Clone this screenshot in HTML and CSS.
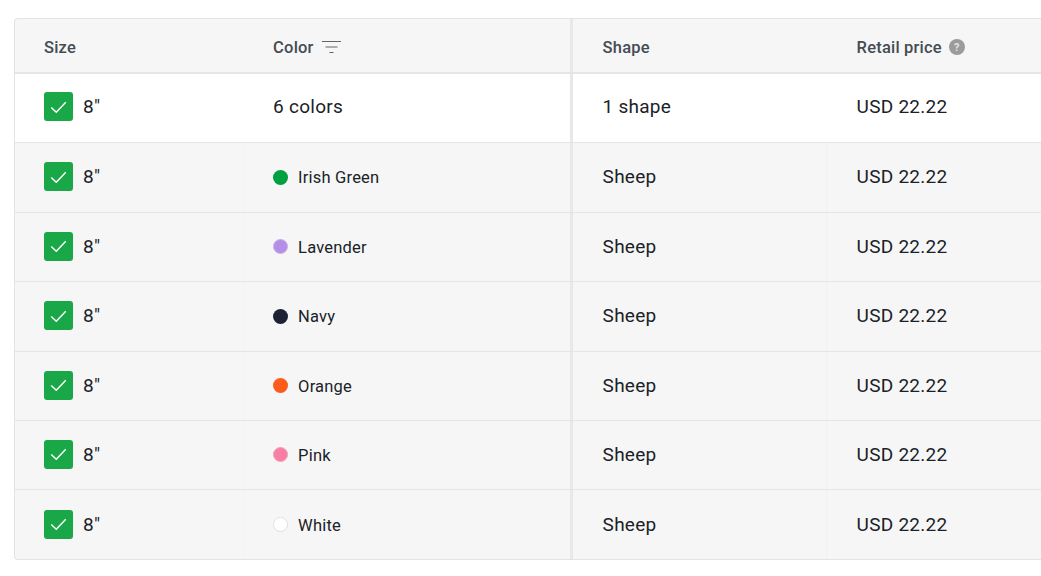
FILE: index.html
```html
<!DOCTYPE html>
<html lang="en">
<head>
<meta charset="utf-8">
<title>Variants</title>
<link rel="stylesheet" href="styles.css">
</head>
<body>
<svg class="defs" width="0" height="0" aria-hidden="true">
  <symbol id="tick" viewBox="0 0 30 30"><path d="M7.5 15.5l5.2 5L22.5 10" fill="none" stroke="#fff" stroke-width="1.5"/></symbol>
</svg>
<div class="table">
  <div class="row head">
    <div class="cell first">Size</div>
    <div class="cell second">Color
      <svg class="filter" width="20" height="14" viewBox="0 0 20 14"><path d="M0 1.5h19M3.5 7h12M7.5 12.5h4" fill="none" stroke="#5f676c" stroke-width="1.2"/></svg>
    </div>
    <div class="cell split">Shape</div>
    <div class="cell">Retail price <span class="help">?</span></div>
  </div>
  <div class="row summary">
    <div class="cell first"><span class="check"><svg width="30" height="30"><use href="#tick"/></svg></span>8"</div>
    <div class="cell second">6 colors</div>
    <div class="cell split">1 shape</div>
    <div class="cell">USD 22.22</div>
  </div>
  <div class="row">
    <div class="cell first"><span class="check"><svg width="30" height="30"><use href="#tick"/></svg></span>8"</div>
    <div class="cell second color"><span class="dot green"></span>Irish Green</div>
    <div class="cell split">Sheep</div>
    <div class="cell">USD 22.22</div>
  </div>
  <div class="row">
    <div class="cell first"><span class="check"><svg width="30" height="30"><use href="#tick"/></svg></span>8"</div>
    <div class="cell second color"><span class="dot lavender"></span>Lavender</div>
    <div class="cell split">Sheep</div>
    <div class="cell">USD 22.22</div>
  </div>
  <div class="row">
    <div class="cell first"><span class="check"><svg width="30" height="30"><use href="#tick"/></svg></span>8"</div>
    <div class="cell second color"><span class="dot navy"></span>Navy</div>
    <div class="cell split">Sheep</div>
    <div class="cell">USD 22.22</div>
  </div>
  <div class="row">
    <div class="cell first"><span class="check"><svg width="30" height="30"><use href="#tick"/></svg></span>8"</div>
    <div class="cell second color"><span class="dot orange"></span>Orange</div>
    <div class="cell split">Sheep</div>
    <div class="cell">USD 22.22</div>
  </div>
  <div class="row penult">
    <div class="cell first"><span class="check"><svg width="30" height="30"><use href="#tick"/></svg></span>8"</div>
    <div class="cell second color"><span class="dot pink"></span>Pink</div>
    <div class="cell split">Sheep</div>
    <div class="cell">USD 22.22</div>
  </div>
  <div class="row last">
    <div class="cell first"><span class="check"><svg width="30" height="30"><use href="#tick"/></svg></span>8"</div>
    <div class="cell second color"><span class="dot white"></span>White</div>
    <div class="cell split">Sheep</div>
    <div class="cell">USD 22.22</div>
  </div>
</div>
</body>
</html>
```
FILE: styles.css
```css
html, body {
  margin: 0;
  height: 576px;
  overflow: hidden;
  background: #fff;
}
body {
  padding: 18px 0 0 13.6px;
  box-sizing: border-box;
  font-family: Roboto, "Liberation Sans", sans-serif;
  color: #1a2228;
}
.defs { position: absolute; }
.table {
  width: 1027px;
  background: #f6f6f6;
  border: 1px solid #e3e3e3;
  border-right: 0;
  border-radius: 4px 0 0 4px;
  overflow: hidden;
}
.row {
  display: grid;
  grid-template-columns: 229px 328px 255px 1fr;
  height: 69.5px;
  box-sizing: border-box;
  border-bottom: 1px solid #e5e5e5;
  font-size: 19px;
  letter-spacing: 0.25px;
}
.row.penult { height: 68.9px; }
.row.last { border-bottom: 0; height: 69.1px; }
.head {
  height: 54.5px;
  border-bottom: 2px solid #e5e5e5;
  font-size: 16.5px;
  letter-spacing: 0.2px;
  font-weight: 500;
  color: #444c52;
}
.summary { background: #fff; }
.cell {
  display: flex;
  align-items: center;
  padding-left: 30px;
  padding-bottom: 1px;
  border-left: 1px solid #f2f2f2;
  margin-left: -1px;
}
.row.last .cell { padding-bottom: 0; }
.cell.first { border-left: 0; margin-left: 0; padding-left: 29.4px; }
.cell.second { padding-left: 29.5px; }
.head .cell { padding-top: 4px; padding-bottom: 0; border-left-color: transparent; }
.summary .cell { padding-bottom: 2px; border-left-color: transparent; }
.cell.split, .head .cell.split, .summary .cell.split {
  border-left: 3px solid #e8e8e8;
  padding-left: 30px;
  margin-left: -2px;
}
.check {
  flex: none;
  width: 29px;
  height: 29px;
  margin-right: 10px;
  border-radius: 3px;
  background: #1aa748;
  display: flex;
  align-items: center;
  justify-content: center;
}
.filter { margin-left: 8px; margin-top: -1px; }
.help {
  width: 16px;
  height: 16px;
  margin-left: 7px;
  border-radius: 50%;
  background: #9a9c9b;
  color: #e6e6e6;
  font-size: 11px;
  font-weight: 700;
  display: flex;
  align-items: center;
  justify-content: center;
}
.color {
  font-size: 16.5px;
  letter-spacing: 0.2px;
  padding-top: 2px;
}
.dot {
  flex: none;
  width: 15px;
  height: 15px;
  margin-right: 10px;
  margin-bottom: 1px;
  border-radius: 50%;
  box-sizing: border-box;
}
.green { background: #009f40; }
.lavender { background: #b58ee6; border: 1px solid #c9b0ea; }
.navy { background: #1c2233; }
.orange { background: #fb5c1c; }
.pink { background: #f97ea3; border: 1px solid #f3a0bb; }
.white { background: #fff; border: 1px solid #e0e0e0; }
```
